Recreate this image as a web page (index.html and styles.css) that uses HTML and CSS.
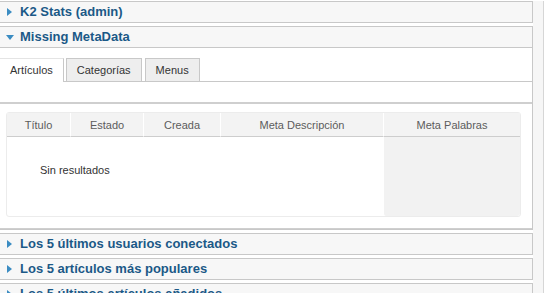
FILE: index.html
```
<!doctype html>
<html>
  <head>
    <title>Panel de control</title>
    <link rel="stylesheet" href="styles.css">
  </head>
  <body>
    <div id='page'>
      <div class='panel'>
        <h3 class='toggler closed'><span>K2 Stats (admin)</span></h3>
      </div>
      <div class='panel'>
        <h3 class='toggler open'><span>Missing MetaData</span></h3>
        <div class='paneBody'>
          <ul class='tabs'>
            <li class='active'>Artículos</li>
            <li>Categorías</li>
            <li>Menus</li>
          </ul>
          <div class='filter'></div>
          <div class='tabPage'>
            <div class='grid'>
              <table>
                <thead>
                  <tr>
                    <th class='cTitle'>Título</th>
                    <th class='cState'>Estado</th>
                    <th class='cDate'>Creada</th>
                    <th class='cDesc'>Meta Descripción</th>
                    <th class='cKeys'>Meta Palabras</th>
                  </tr>
                </thead>
                <tbody>
                  <tr>
                    <td colspan='4' class='empty'>Sin resultados</td>
                    <td class='keysCell'></td>
                  </tr>
                </tbody>
              </table>
            </div>
          </div>
        </div>
      </div>
      <div class='panel'>
        <h3 class='toggler closed'><span>Los 5 últimos usuarios conectados</span></h3>
      </div>
      <div class='panel'>
        <h3 class='toggler closed'><span>Los 5 artículos más populares</span></h3>
      </div>
      <div class='panel'>
        <h3 class='toggler closed'><span>Los 5 últimos artículos añadidos</span></h3>
      </div>
    </div>
  </body>
</html>
```

FILE: styles.css
```
body {
  margin:             0;
  padding-top:        1px;
  background-color:   #fff;
  font-family:        "Liberation Sans", Arial, sans-serif;
  font-size:          11px;
  color:              #333;
  overflow:           hidden;
}
#page {
  width:              533px;
  padding-right:      10px;
  border-right:       1px solid #d6d6d6;
  background:         linear-gradient(to right, #fff 533px, #f6f6f6 533px);
  min-height:         300px;
}
.panel {
  border:             1px solid #c8c8c8;
  border-left:        none;
  margin-bottom:      3px;
  background-color:   #fff;
}
.toggler {
  margin:             0;
  height:             20px;
  line-height:        20px;
  padding-left:       20px;
  position:           relative;
  background-color:   #f7f7f7;
  color:              #1b5987;
  font-size:          13px;
  font-weight:        bold;
}
.toggler.open {
  border-bottom:      1px solid #c8c8c8;
}
.toggler::before {
  content:            '';
  position:           absolute;
  width:              0;
  height:             0;
}
.toggler.closed::before {
  left:               7px;
  top:                6px;
  border-top:         4px solid transparent;
  border-bottom:      4px solid transparent;
  border-left:        5px solid #3b8cc2;
}
.toggler.open::before {
  left:               6px;
  top:                8px;
  border-left:        4px solid transparent;
  border-right:       4px solid transparent;
  border-top:         5px solid #3b8cc2;
}
.paneBody {
  padding-top:        10px;
}
.tabs {
  list-style:         none;
  margin:             0;
  padding:            0;
  display:            flex;
  gap:                3px;
  height:             23px;
  position:           relative;
  z-index:            1;
}
.tabs li {
  border:             1px solid #c8c8c8;
  border-bottom:      none;
  background-color:   #eee;
  padding:            0 10px;
  line-height:        22px;
  color:              #333;
}
.tabs li.active {
  background-color:   #fff;
  height:             23px;
  margin-left:        -1px;
  margin-right:       -1px;
  border-top-color:   #e4e4e4;
}
.filter {
  height:             20px;
  border-top:         1px solid #c8c8c8;
}
.tabPage {
  border-top:         2px solid #cfcfcf;
  border-bottom:      1px solid #cfcfcf;
  padding:            8px 11px 11px 6px;
}
.grid {
  border:             1px solid #ececec;
  border-radius:      3px;
}
table {
  border-collapse:    separate;
  border-spacing:     0;
  width:              100%;
  table-layout:       fixed;
}
th {
  height:             23px;
  background-color:   #f3f3f3;
  border-bottom:      1px solid #cdcdcd;
  border-left:        1px solid #fff;
  font-weight:        normal;
  color:              #5c5c5c;
  padding:            0;
}
th.cTitle {
  width:              63px;
  border-left:        none;
}
th.cState { width: 72px; }
th.cDate { width: 76px; }
th.cDesc { width: 162px; }
td {
  padding:            0;
  vertical-align:     top;
}
td.empty {
  padding:            27px 0 0 33px;
  height:             52px;
  color:              #333;
}
td.keysCell {
  background-color:   #f2f2f2;
  border-left:        1px solid #fff;
  border-radius:      0 0 3px 3px;
}
```
